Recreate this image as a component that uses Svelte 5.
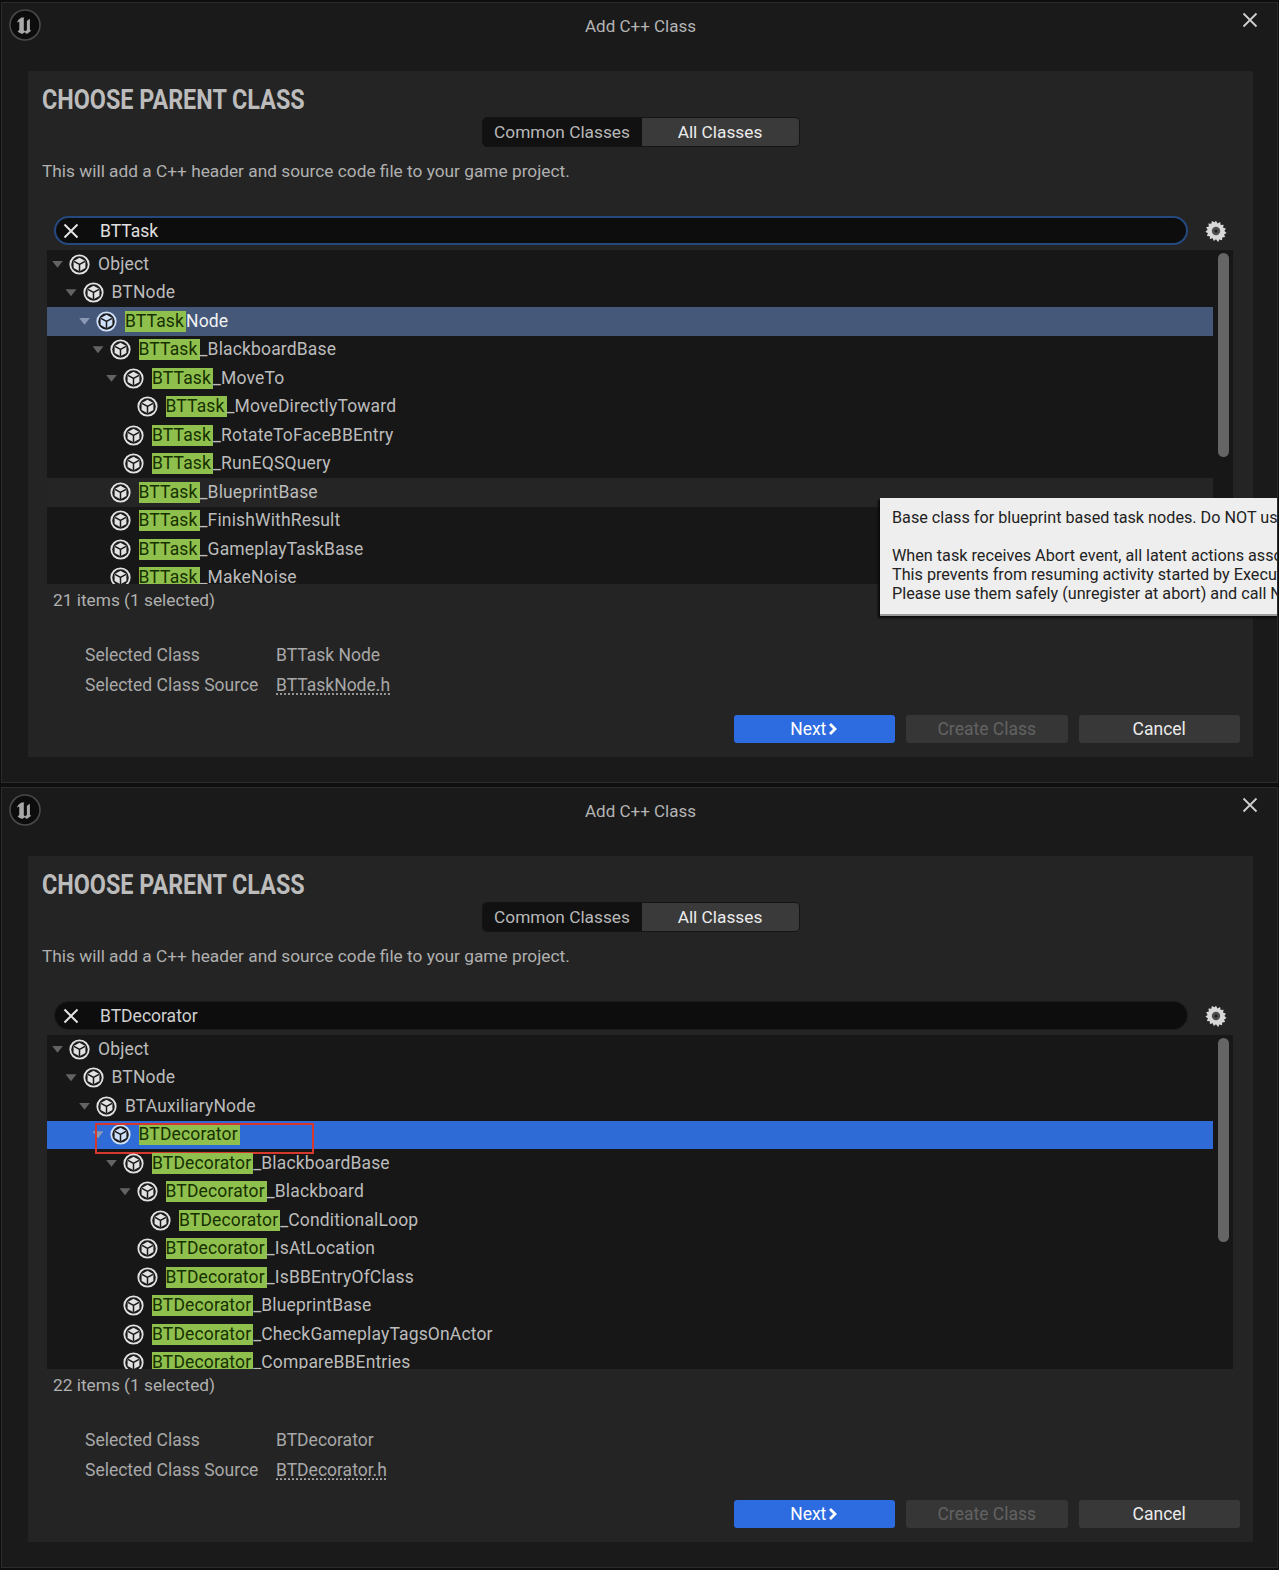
<script lang="ts">
  const dialogs = [
    {
      query: 'BTTask',
      focused: true,
      count: '21 items (1 selected)',
      selectedName: 'BTTask Node',
      source: 'BTTaskNode.h',
      selectedTone: 'muted',
      rows: [
        { depth: 0, arrow: true, rest: 'Object' },
        { depth: 1, arrow: true, rest: 'BTNode' },
        { depth: 2, arrow: true, hit: 'BTTask', rest: 'Node', selected: true },
        { depth: 3, arrow: true, hit: 'BTTask', rest: '_BlackboardBase' },
        { depth: 4, arrow: true, hit: 'BTTask', rest: '_MoveTo' },
        { depth: 5, hit: 'BTTask', rest: '_MoveDirectlyToward' },
        { depth: 4, hit: 'BTTask', rest: '_RotateToFaceBBEntry' },
        { depth: 4, hit: 'BTTask', rest: '_RunEQSQuery' },
        { depth: 3, hit: 'BTTask', rest: '_BlueprintBase', hover: true },
        { depth: 3, hit: 'BTTask', rest: '_FinishWithResult' },
        { depth: 3, hit: 'BTTask', rest: '_GameplayTaskBase' },
        { depth: 3, hit: 'BTTask', rest: '_MakeNoise' }
      ]
    },
    {
      query: 'BTDecorator',
      focused: false,
      count: '22 items (1 selected)',
      selectedName: 'BTDecorator',
      source: 'BTDecorator.h',
      selectedTone: 'bright',
      rows: [
        { depth: 0, arrow: true, rest: 'Object' },
        { depth: 1, arrow: true, rest: 'BTNode' },
        { depth: 2, arrow: true, rest: 'BTAuxiliaryNode' },
        { depth: 3, arrow: true, hit: 'BTDecorator', rest: '', selected: true, marked: true },
        { depth: 4, arrow: true, hit: 'BTDecorator', rest: '_BlackboardBase' },
        { depth: 5, arrow: true, hit: 'BTDecorator', rest: '_Blackboard' },
        { depth: 6, hit: 'BTDecorator', rest: '_ConditionalLoop' },
        { depth: 5, hit: 'BTDecorator', rest: '_IsAtLocation' },
        { depth: 5, hit: 'BTDecorator', rest: '_IsBBEntryOfClass' },
        { depth: 4, hit: 'BTDecorator', rest: '_BlueprintBase' },
        { depth: 4, hit: 'BTDecorator', rest: '_CheckGameplayTagsOnActor' },
        { depth: 4, hit: 'BTDecorator', rest: '_CompareBBEntries' }
      ]
    }
  ];
</script>

{#snippet cube()}
  <svg class="cube" viewBox="0 0 21 21" width="21" height="21">
    <circle cx="10.5" cy="10.5" r="9.2" fill="#1b1b1b" stroke="currentColor" stroke-width="1.8" />
    <path d="M10.5 3.800 16.400 7.100v6.800l-5.900 3.300-5.900-3.300V7.100z" fill="currentColor" />
    <path d="M5 7.400l5.500 3.100 5.500-3.100M10.500 10.500v6.400" fill="none" stroke="#1b1b1b" stroke-width="1.5" />
  </svg>
{/snippet}

{#each dialogs as d, i}
  <section class="win">
    <header class="titlebar">
      <svg class="logo" viewBox="0 0 32 32" width="32" height="32">
        <circle cx="16" cy="16" r="15" fill="#0c0c0c" stroke="#4a4a4a" stroke-width="1.6" />
        <path d="M12.500 8.500c-2.600 1.400-4.400 3.600-4.400 5.200 1-.9 1.900-1.100 2.200-.8v7.300c0 1.100-.9 1.700-1.900 1.900 1.600 1.700 3.400 2.700 4.800 2.900 1-.8 1.900-1.400 2.600-1.800l1.900 1.800 4.600-3.200c-.8-.3-1.400-1-1.400-1.900V9.700c-1.100.5-2.100 1.200-3 2.200v9.200l-1.700 1.100-1.400-.9V9.900c0-.5.3-1 .6-1.400z" fill="#a8a8a8" />
      </svg>
      <span class="wintitle">Add C++ Class</span>
      <svg class="close" viewBox="0 0 16 16" width="16" height="16">
        <path d="M1.500 1.500l13 13M14.500 1.500l-13 13" stroke="#cfcfcf" stroke-width="1.8" fill="none" />
      </svg>
    </header>

    <div class="panel">
      <h1>CHOOSE PARENT CLASS</h1>
      <div class="tabs">
        <span class="tab">Common Classes</span>
        <span class="tab active">All Classes</span>
      </div>
      <p class="desc">This will add a C++ header and source code file to your game project.</p>

      <div class="searchrow">
        <div class="search" class:focused={d.focused}>
          <svg viewBox="0 0 16 16" width="16" height="16">
            <path d="M1.500 1.500l13 13M14.500 1.500l-13 13" stroke="#e4e4e4" stroke-width="2" fill="none" />
          </svg>
          <span>{d.query}</span>
        </div>
        <svg class="gear" viewBox="0 0 22 22" width="22" height="22">
          <path d="M11 0.800l1.500 2.600 2.600-1.300.6 2.900 2.900-.2-.5 2.900 2.800.8-1.500 2.500 2.200 1.900-2.500 1.500 1 2.700-2.900.3-.1 2.900-2.800-.8-1.100 2.700L11 19.200l-2.200 1.800-1.100-2.700-2.800.8-.1-2.900-2.900-.3 1-2.700L.4 11.700l2.200-1.900L1.100 7.300l2.800-.8-.5-2.900 2.900.2.600-2.900 2.600 1.300z" fill="#d8d8d8" />
          <circle cx="11" cy="11" r="4.200" fill="#4e4e4e" />
          <circle cx="11" cy="11" r="1.500" fill="#1e1e1e" />
        </svg>
      </div>

      <div class="tree">
        <div class="rows">
          {#each d.rows as r}
            <div class="row" class:selected={r.selected} class:tone-bright={r.selected && d.selectedTone === 'bright'} class:hover={r.hover} style="padding-left: {5 + r.depth * 13.5}px">
              <span class="arrow" class:open={r.arrow}></span>
              {@render cube()}
              <span class="label">{#if r.hit}<mark>{r.hit}</mark>{/if}{r.rest}</span>
              {#if r.marked}<span class="redbox"></span>{/if}
            </div>
          {/each}
        </div>
        <div class="scrolltrack"><div class="thumb"></div></div>
      </div>

      <div class="status">{d.count}</div>

      <dl class="details">
        <dt>Selected Class</dt>
        <dd>{d.selectedName}</dd>
        <dt>Selected Class Source</dt>
        <dd class="link">{d.source}</dd>
      </dl>

      <div class="actions">
        <button class="primary">Next
          <svg viewBox="0 0 10 12" width="10" height="12"><path d="M2 1l5 5-5 5" stroke="#fff" stroke-width="2.800" fill="none" /></svg>
        </button>
        <button disabled>Create Class</button>
        <button>Cancel</button>
      </div>
    </div>

    {#if i === 0}
      <div class="tooltip">
        <p>Base class for blueprint based task nodes. Do NOT use it for creating native c++ classes!</p>
        <p class="gap">When task receives Abort event, all latent actions associated this instance are being removed.</p>
        <p>This prevents from resuming activity started by Execute, but does not cover external events.</p>
        <p>Please use them safely (unregister at abort) and call NewTask.FinishLatentAbort() when ready.</p>
      </div>
    {/if}
  </section>
{/each}

<style>
  :global(body) {
    margin: 0;
    background: #0e0e0e;
    overflow: hidden;
  }

  .win {
    position: relative;
    box-sizing: border-box;
    height: 781px;
    margin: 2px 1px 4px 1px;
    padding: 0 24px 0 26px;
    background: #1a1a1a;
    border: 1px solid #2b2b2b;
    overflow: hidden;
    font-family: Roboto, "Liberation Sans", sans-serif;
    font-size: 17.500px;
    color: #c4c4c4;
  }

  .titlebar {
    position: relative;
    display: flex;
    align-items: center;
    justify-content: center;
    height: 68px;
    padding-bottom: 23px;
    box-sizing: border-box;
  }

  .logo {
    position: absolute;
    left: -19px;
    top: 6px;
  }

  .wintitle {
    font-size: 17px;
    color: #b4b4b4;
  }

  .close {
    position: absolute;
    right: -5px;
    top: 9px;
  }

  .panel {
    display: flex;
    flex-direction: column;
    height: 686px;
    padding-top: 15px;
    box-sizing: border-box;
    background: #242424;
  }

  h1 {
    margin: 0 0 0 14px;
    height: 28px;
    line-height: 28px;
    font-size: 27px;
    font-weight: 700;
    color: #bcbcbc;
    white-space: nowrap;
    transform: scaleX(0.865);
    transform-origin: left center;
  }

  .tabs {
    display: flex;
    align-self: center;
    margin-top: 3px;
    width: 318px;
    height: 30px;
    box-sizing: border-box;
    background: #111;
    border-radius: 5px;
    border: 1px solid #141414;
    overflow: hidden;
    font-size: 17.300px;
  }

  .tab {
    flex: 1 1 160px;
    display: flex;
    align-items: center;
    justify-content: center;
    color: #b8b8b8;
  }

  .tab.active {
    flex-basis: 158px;
    background: #3a3a3a;
    color: #ececec;
  }

  .desc {
    margin: 14px 0 0 14px;
    height: 20px;
    line-height: 20px;
    font-size: 17.300px;
    color: #b0b0b0;
  }

  .searchrow {
    display: flex;
    align-items: center;
    margin: 35px 0 0 26px;
    height: 29px;
  }

  .search {
    display: flex;
    align-items: center;
    gap: 21px;
    box-sizing: border-box;
    width: 1134px;
    height: 29px;
    padding-left: 8px;
    background: #0d0d0d;
    border: 1px solid #1c1c1c;
    border-radius: 15px;
    color: #d0d0d0;
  }

  .search.focused {
    border: 2px solid #24497f;
    padding-left: 7px;
    color: #e0e0e0;
  }

  .gear {
    margin-left: 17px;
  }

  .tree {
    display: flex;
    margin: 5px 20px 0 19px;
    height: 334px;
    background: #171717;
    overflow: hidden;
  }

  .rows {
    flex: 1;
    min-width: 0;
  }

  .row {
    position: relative;
    display: flex;
    align-items: center;
    height: 28.500px;
    box-sizing: border-box;
    white-space: nowrap;
    letter-spacing: 0.15px;
    color: #bcbcbc;
  }

  .row.hover {
    background: #252525;
  }

  .row.selected {
    background: #45587a;
    color: #f2f2f2;
  }

  .row.tone-bright {
    background: #2f6bd6;
  }

  .row.selected .cube {
    color: #cfe0fa;
  }

  .arrow {
    flex: none;
    width: 11px;
    height: 7px;
    margin-right: 6px;
  }

  .arrow.open {
    background: #636363;
    clip-path: polygon(0 0, 100% 0, 50% 100%);
  }

  .row.selected .arrow.open {
    background: #8a9ab5;
  }

  .cube {
    flex: none;
    margin-right: 8px;
    color: #e2e2e2;
  }

  .label {
    line-height: 21px;
  }

  mark {
    display: inline-block;
    padding-right: 2px;
    background: #8fc04e;
    color: #173000;
  }

  .redbox {
    position: absolute;
    left: 48px;
    top: 2px;
    width: 219px;
    height: 31px;
    box-sizing: border-box;
    border: 2px solid #d6382e;
  }

  .scrolltrack {
    flex: none;
    width: 20px;
    padding: 3px 3px 0 5px;
    box-sizing: border-box;
  }

  .thumb {
    width: 11px;
    height: 204px;
    background: #656565;
    border-radius: 6px;
  }

  .status {
    margin: 6px 0 0 25px;
    height: 20px;
    line-height: 20px;
    font-size: 17.300px;
    color: #b0b0b0;
  }

  .details {
    display: grid;
    grid-template-columns: 191px 1fr;
    grid-auto-rows: 30px;
    align-items: center;
    margin: 30px 0 0 57px;
    color: #a8a8a8;
  }

  dt,
  dd {
    margin: 0;
  }

  dd.link {
    text-decoration: underline;
    text-decoration-style: dotted;
    text-underline-offset: 3px;
  }

  .actions {
    display: flex;
    justify-content: flex-end;
    gap: 11px;
    margin: 15px 13px 0 0;
  }

  button {
    display: flex;
    align-items: center;
    justify-content: center;
    gap: 2px;
    width: 161.500px;
    height: 28px;
    padding: 0;
    border: none;
    border-radius: 3px;
    background: #383838;
    color: #ebebeb;
    font: inherit;
  }

  button.primary {
    background: #2d6be0;
    color: #fff;
  }

  button:disabled {
    background: #363636;
    color: #626262;
  }

  .tooltip {
    position: absolute;
    left: 878px;
    top: 495px;
    width: 460px;
    height: 118px;
    box-sizing: border-box;
    padding: 10px 0 0 12px;
    background: #eeeeee;
    border-bottom: 2px solid #9a9a9a;
    box-shadow: -2px 2px 2px #0a0a0a;
    color: #222;
    font-size: 16.200px;
    line-height: 19px;
    white-space: nowrap;
  }

  .tooltip p {
    margin: 0;
  }

  .tooltip .gap {
    margin-top: 19px;
  }
</style>
